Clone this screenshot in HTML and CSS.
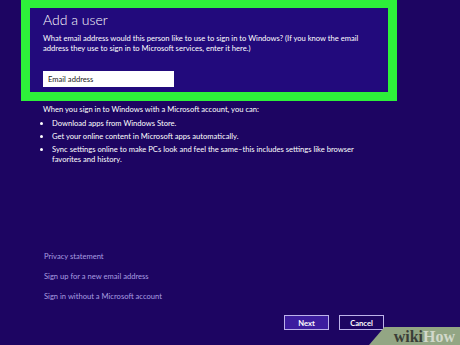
FILE: index.html
```html
<!DOCTYPE html>
<html lang="en">
<head>
    <meta charset="UTF-8">
    <title>Add a user</title>
    <link rel="stylesheet" href="styles.css">
</head>
<body>

<div class="page">
    <!-- highlighted header -->
    <div class="highlight">
        <h1>Add a user</h1>
        <p class="intro">What email address would this person like to use to sign in to Windows? (If you know the email address they use to sign in to Microsoft services, enter it here.)</p>
        <input type="text" class="email" placeholder="Email address">
    </div>

    <div class="info">
        <p>When you sign in to Windows with a Microsoft account, you can:</p>
        <ul>
            <li>Download apps from Windows Store.</li>
            <li>Get your online content in Microsoft apps automatically.</li>
            <li>Sync settings online to make PCs look and feel the same–this includes settings like browser favorites and history.</li>
        </ul>
    </div>

    <div class="links">
        <a href="#">Privacy statement</a>
        <a href="#">Sign up for a new email address</a>
        <a href="#">Sign in without a Microsoft account</a>
    </div>

    <div class="actions">
        <button class="btn btn-next">Next</button>
        <button class="btn">Cancel</button>
    </div>
</div>

<div class="watermark">
    <span class="wiki">wiki</span><span class="how">How</span>
</div>

</body>
</html>
```

FILE: styles.css
```css
body {
    margin: 0;
    background-color: #1d0562;
    color: #ffffff;
    font-family: Lato, "Liberation Sans", sans-serif;
    width: 460px;
    height: 345px;
    overflow: hidden;
    position: relative;
}

.page {
    display: flex;
    flex-direction: column;
    height: 345px;
}

.highlight {
    margin-left: 21px;
    width: 345px;
    height: 84px;
    border: 9px solid #2ef03a;
    border-top-width: 8px;
    background-color: #220a7c;
    padding: 0 0 0 13px;
}

.highlight h1 {
    font-size: 14px;
    font-weight: 300;
    margin: 3px 0 0 0;
    line-height: 18px;
}

.intro {
    font-size: 7.6px;
    line-height: 10px;
    margin: 4px 0 0 0;
    width: 330px;
}

.email {
    display: block;
    margin-top: 18px;
    width: 131px;
    height: 16px;
    box-sizing: border-box;
    border: none;
    padding: 0 5px;
    font-family: inherit;
    font-size: 7.6px;
}

.email::placeholder {
    color: #222222;
}

.info {
    padding-left: 43px;
    font-size: 7.6px;
    line-height: 10px;
}

.info p {
    margin: 3px 0 0 0;
}

.info ul {
    margin: 4px 0 0 0;
    padding: 0 0 0 9px;
    width: 330px;
}

.info li {
    margin-bottom: 3px;
}

.links {
    display: flex;
    flex-direction: column;
    gap: 10px;
    padding-left: 44px;
    margin-top: 84px;
}

.links a {
    color: #a89de0;
    text-decoration: none;
    font-size: 7.6px;
    line-height: 10px;
}

.actions {
    display: flex;
    gap: 10px;
    margin-left: 284px;
    margin-top: 14px;
}

.btn {
    width: 45px;
    height: 15px;
    box-sizing: border-box;
    border: 1px solid #bdb3ea;
    background-color: #1d0562;
    color: #ffffff;
    font-family: inherit;
    font-size: 7.6px;
    font-weight: 700;
    padding: 0;
}

.btn-next {
    background-color: #3c1d9e;
}

.watermark {
    position: absolute;
    right: 0;
    bottom: 0;
    width: 91px;
    height: 18px;
    background-color: #93a684;
    clip-path: polygon(17% 0, 100% 0, 100% 100%, 0 100%);
    font-family: "Liberation Serif", serif;
    font-weight: 700;
    font-size: 16px;
    line-height: 20px;
    text-align: right;
    padding-right: 5px;
    box-sizing: border-box;
}

.wiki {
    color: #3a3d36;
}

.how {
    color: #d2d9cb;
}
```
